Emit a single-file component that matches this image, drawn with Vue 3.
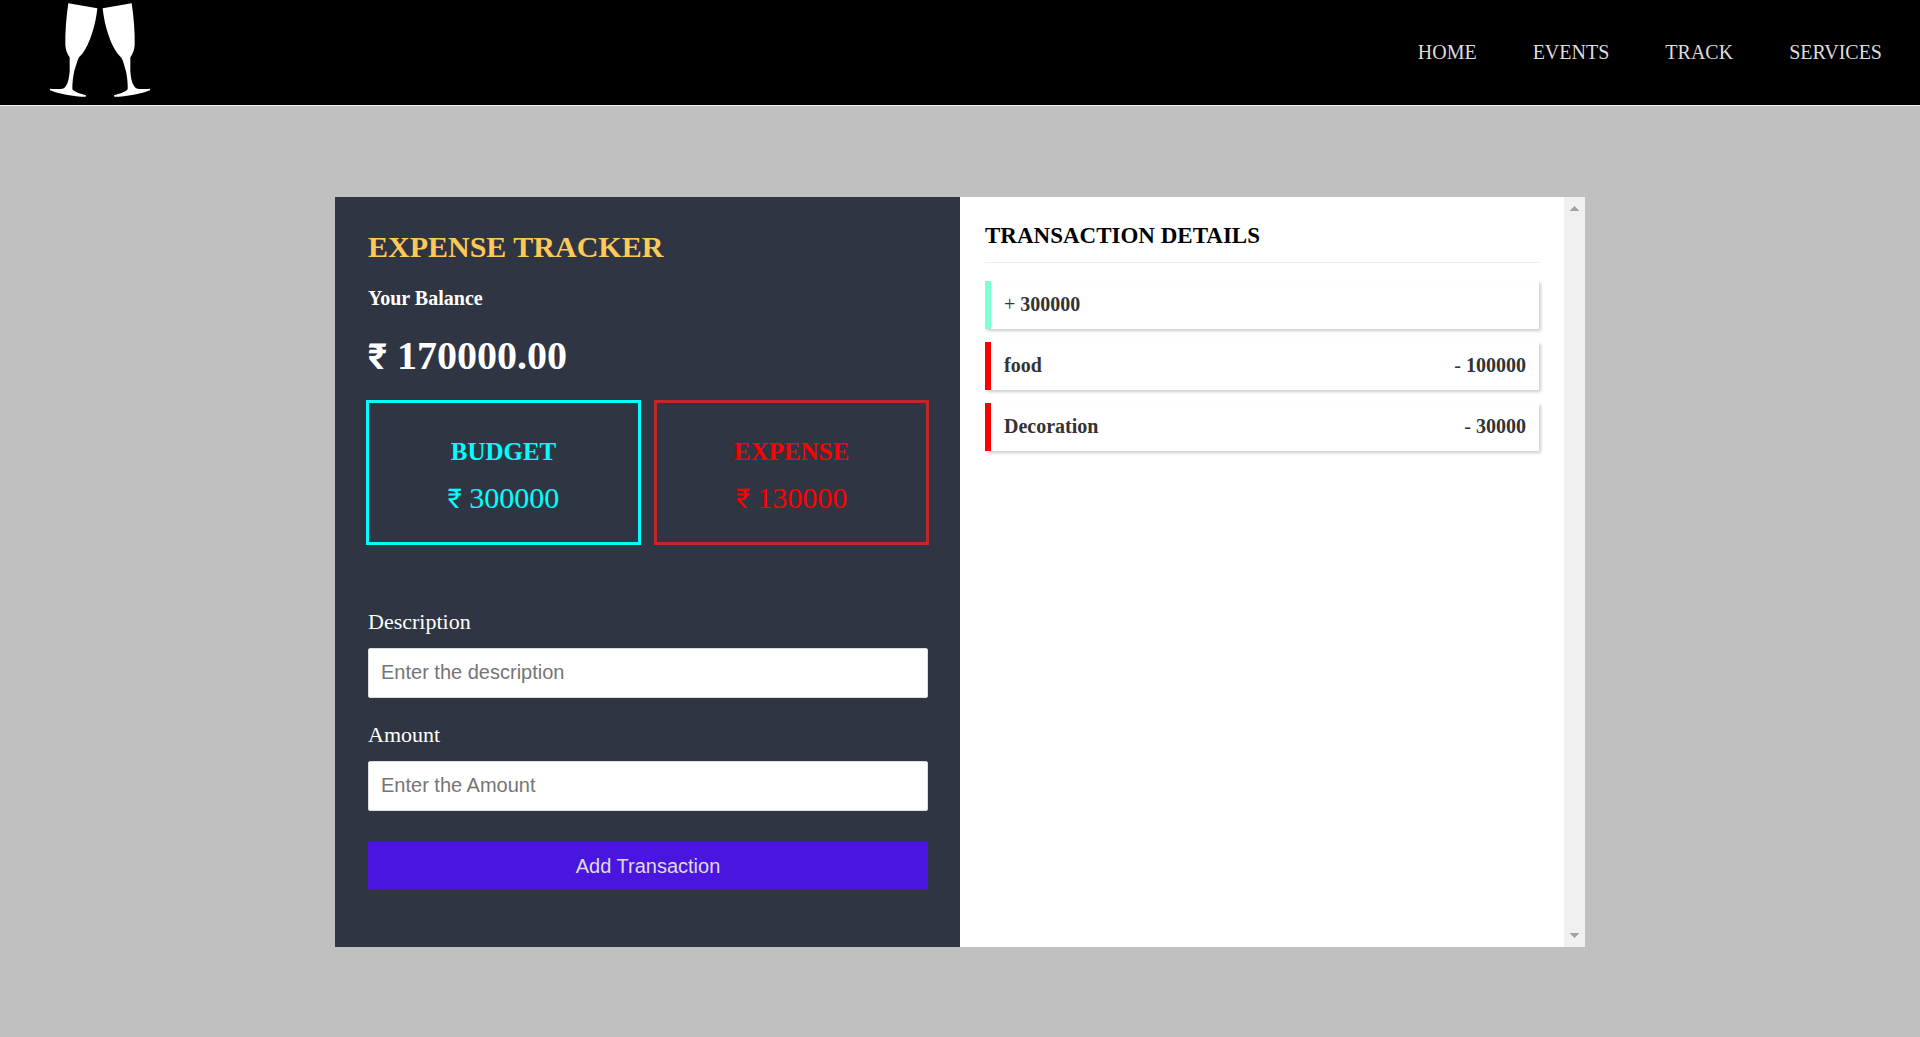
<script setup>
import { ref, computed } from 'vue'

const links = ['HOME', 'EVENTS', 'TRACK', 'SERVICES']
const budget = ref(300000)
const entries = ref([
  { id: 1, label: 'food', amount: 100000 },
  { id: 2, label: 'Decoration', amount: 30000 },
])
const description = ref('')
const amount = ref('')

const expense = computed(() => entries.value.reduce((sum, e) => sum + e.amount, 0))
const balance = computed(() => (budget.value - expense.value).toFixed(2))

function addTransaction() {
  const value = Number(amount.value)
  if (!description.value || !value) return
  entries.value.push({ id: Date.now(), label: description.value, amount: value })
  description.value = ''
  amount.value = ''
}
</script>

<template>
  <div class="page">
    <header class="header">
      <a class="logo" href="#" aria-label="Home">
        <svg viewBox="60 10 300 281" width="100" height="94" fill="#fff" aria-hidden="true">
          <path d="M115 10 L202 25 C197 75 180 130 157 162 L147 172 C144 178 142 183 140 190 L133 213 C129 230 127 250 127 268 C134 276 146 280 168 286 L167 291 C130 290 85 281 60 271 L60 267 C75 268 92 268 102 265 C112 257 117 240 119 215 L119 172 C112 163 107 150 106 136 C105 95 109 50 115 10 Z" />
          <path d="M305 10 L218 25 C223 75 240 130 263 162 L274 174 C277 179 279 184 281 191 L287 211 C291 226 294 250 293 268 C286 276 274 280 252 286 L253 291 C290 290 335 281 360 271 L360 267 C345 268 328 268 318 265 C308 257 303 240 301 215 L301 172 C308 163 313 150 314 136 C315 95 311 50 305 10 Z" />
        </svg>
      </a>
      <nav class="nav">
        <a v-for="link in links" :key="link" href="#">{{ link }}</a>
      </nav>
    </header>

    <main class="main">
      <div class="card">
        <section class="tracker">
          <h1>EXPENSE TRACKER</h1>
          <h2>Your Balance</h2>
          <p class="balance"><span class="currency">₹</span> {{ balance }}</p>
          <div class="totals">
            <div class="total budget">
              <h3>BUDGET</h3>
              <p><span class="currency">₹</span> {{ budget }}</p>
            </div>
            <div class="total expense">
              <h3>EXPENSE</h3>
              <p><span class="currency">₹</span> {{ expense }}</p>
            </div>
          </div>
          <form @submit.prevent="addTransaction">
            <label for="description">Description</label>
            <input id="description" v-model="description" type="text" placeholder="Enter the description" />
            <label for="amount">Amount</label>
            <input id="amount" v-model="amount" type="text" placeholder="Enter the Amount" />
            <button type="submit">Add Transaction</button>
          </form>
        </section>

        <section class="details">
          <div class="details-body">
            <h2>TRANSACTION DETAILS</h2>
            <ul>
              <li class="income"><span><i>+</i> {{ budget }}</span></li>
              <li v-for="entry in entries" :key="entry.id">
                <span>{{ entry.label }}</span>
                <span><i>-</i> {{ entry.amount }}</span>
              </li>
            </ul>
          </div>
          <div class="scrollbar" aria-hidden="true">
            <svg width="9" height="5" viewBox="0 0 9 5"><path d="M4 0h1v1h1v1h1v1h1v1h1v1H0V4h1V3h1V2h1V1h1z" /></svg>
            <svg width="9" height="5" viewBox="0 0 9 5"><path d="M0 0h9v1H8v1H7v1H6v1H5v1H4V4H3V3H2V2H1V1H0z" /></svg>
          </div>
        </section>
      </div>
    </main>
  </div>
</template>

<style>
body {
  margin: 0;
  background: #c0c0c0;
}
</style>

<style scoped>
.page {
  min-height: 100vh;
  display: flex;
  flex-direction: column;
  font-family: "Liberation Serif", "Times New Roman", serif;
  font-size: 20px;
}
.page * {
  box-sizing: border-box;
}
h1, h2, h3, p, ul {
  margin: 0;
  padding: 0;
}
.header {
  height: 106px;
  display: flex;
  align-items: center;
  justify-content: space-between;
  padding: 0 38px 0 50px;
  background: #000;
  border-bottom: 1px solid #f8f0f8;
}
.logo {
  display: flex;
  align-self: flex-start;
  padding-top: 3px;
}
.nav {
  display: flex;
  gap: 56px;
}
.nav a {
  color: #ddd;
  text-decoration: none;
}
.main {
  flex: 1;
  display: flex;
  align-items: center;
  justify-content: center;
}
.card {
  display: grid;
  grid-template-columns: 1fr 1fr;
  width: 100%;
  max-width: 1250px;
  min-height: 750px;
}
.tracker {
  padding: 32px 32px 56px 33px;
  background: #2f3542;
  color: #fff;
}
.tracker h1 {
  font-size: 30px;
  line-height: 36px;
  color: #ffc857;
}
.tracker h2 {
  margin-top: 23px;
  font-size: 20px;
  line-height: 20px;
}
.balance {
  margin-top: 26px;
  font-size: 40px;
  font-weight: 700;
  line-height: 44px;
}
.currency {
  font-family: Roboto, "Noto Sans", sans-serif;
  font-size: 27px;
  line-height: 1;
}
.balance .currency {
  font-size: 36px;
}
.totals {
  display: grid;
  grid-template-columns: 1fr 1fr;
  gap: 13px;
  margin: 22px -1px 0 -2px;
}
.total {
  height: 145px;
  padding: 33px 0;
  border: 3px solid;
  text-align: center;
}
.total h3 {
  font-size: 25px;
  line-height: 32px;
}
.total p {
  margin-top: 12px;
  font-size: 30px;
  line-height: 36px;
}
.budget {
  color: #0ff;
}
.expense {
  color: #f00;
  border-color: #b92b2b;
}
form {
  display: flex;
  flex-direction: column;
  margin-top: 64px;
}
label {
  font-size: 22px;
  line-height: 26px;
}
input {
  height: 50px;
  margin: 13px 0 24px;
  padding: 0 12px;
  border: 1px solid #ddd;
  border-radius: 2px;
  background: #fff;
  font-family: "Liberation Sans", Arial, sans-serif;
  font-size: 20px;
}
input::placeholder {
  color: #757575;
}
button {
  height: 48px;
  margin-top: 7px;
  padding: 1px 0 0;
  border: 0;
  background: #4b15e0;
  color: #ddd;
  font-family: "Liberation Sans", Arial, sans-serif;
  font-size: 20px;
}
.details {
  display: flex;
  background: #fff;
}
.details-body {
  flex: 1;
  padding: 25px;
}
.details h2 {
  padding: 1px 0 13px;
  border-bottom: 1px solid #eee;
  font-size: 23px;
  line-height: 26px;
}
ul {
  display: flex;
  flex-direction: column;
  gap: 13px;
  margin-top: 18px;
  list-style: none;
}
li {
  display: flex;
  align-items: center;
  justify-content: space-between;
  height: 48px;
  padding: 0 13px;
  border-left: 6px solid #f00;
  box-shadow: 2px 2px 3px rgba(0, 0, 0, 0.2);
  color: #333;
  font-weight: 700;
}
li.income {
  border-color: #7fffd4;
}
i {
  font-style: normal;
  font-weight: 400;
}
.scrollbar {
  width: 21px;
  display: flex;
  flex-direction: column;
  align-items: center;
  justify-content: space-between;
  padding: 9px 0;
  background: #f0f0f0;
}
.scrollbar path {
  fill: #a3a3a3;
}
</style>
